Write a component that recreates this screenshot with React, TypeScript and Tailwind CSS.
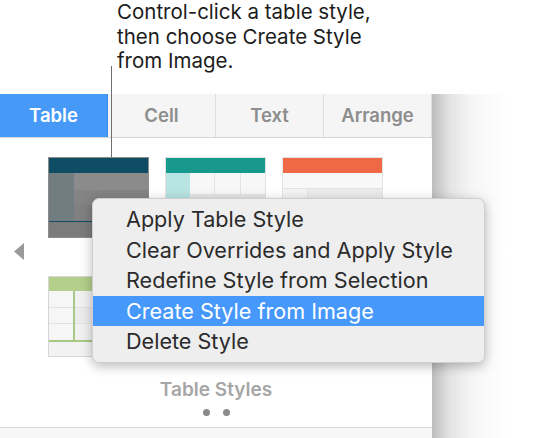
import React from "react";

const sans = "font-['Inter','Liberation_Sans',sans-serif]";

function DarkThumb() {
  return (
    <div className="w-[101px] h-[81px] border border-[#8c8c8c] flex flex-col bg-[#7d7d7d]">
      <div className="h-[15px] bg-[#0e4d63]" />
      <div className="flex flex-1">
        <div className="w-[25px] bg-[#727d82]" />
        <div className="flex-1 flex flex-col">
          <div className="h-[17px] bg-[#8b8b8b]" />
          <div className="h-[15px] bg-[#848484]" />
          <div className="h-[16px] bg-[#808080]" />
        </div>
      </div>
      <div className="h-px bg-[#0e4d63]" />
      <div className="h-[16px] bg-[#7b7b7b]" />
    </div>
  );
}

function TealThumb() {
  return (
    <div className="w-[101px] h-[81px] border border-[#e2e2e2] flex flex-col bg-white">
      <div className="h-[15px] bg-[#18998e]" />
      <div className="flex flex-1">
        <div className="w-[24px] bg-[#b8e4e4]" />
        <div className="flex-1 grid grid-cols-3 grid-rows-3 gap-px bg-[#e4e4e4]">
          <div className="bg-[#f7f7f7]" />
          <div className="bg-[#f7f7f7]" />
          <div className="bg-[#f7f7f7]" />
          <div className="bg-[#e6e6e6]" />
          <div className="bg-[#e6e6e6]" />
          <div className="bg-[#e6e6e6]" />
          <div className="bg-[#f7f7f7]" />
          <div className="bg-[#f7f7f7]" />
          <div className="bg-[#f7f7f7]" />
        </div>
      </div>
    </div>
  );
}

function OrangeThumb() {
  return (
    <div className="w-[101px] h-[81px] border border-[#e4e4e4] flex flex-col bg-white">
      <div className="h-[15px] bg-[#ef6947]" />
      <div className="flex-1 flex flex-col gap-px bg-[#e2e2e2]">
        <div className="flex-1 bg-[#f8f8f8]" />
        <div className="flex-1 flex gap-px">
          <div className="w-[24px] bg-[#f4f4f4]" />
          <div className="flex-1 bg-[#ececec]" />
        </div>
        <div className="flex-1 bg-[#f8f8f8]" />
        <div className="flex-1 bg-[#ececec]" />
      </div>
    </div>
  );
}

function GreenThumb() {
  return (
    <div className="w-[101px] h-[81px] border border-[#d6d6d6] flex flex-col bg-[#f3f3f3]">
      <div className="h-[14px] bg-[#b3cf8b]" />
      <div className="flex h-[49px]">
        <div className="w-[24px] flex flex-col gap-px bg-[#e2e2e2]">
          <div className="flex-1 bg-[#f6f6f6]" />
          <div className="flex-1 bg-[#f6f6f6]" />
          <div className="flex-1 bg-[#f6f6f6]" />
        </div>
        <div className="w-[2px] bg-[#a9c884]" />
        <div className="flex-1 flex flex-col gap-px bg-[#e2e2e2]">
          <div className="flex-1 bg-[#f1f1f1]" />
          <div className="flex-1 bg-[#ececec]" />
          <div className="flex-1 bg-[#f1f1f1]" />
        </div>
      </div>
      <div className="h-[2px] bg-[#a9c884]" />
      <div className="flex-1 bg-[#f2f2f2]" />
    </div>
  );
}

const tabs = ["Table", "Cell", "Text", "Arrange"];

const menuItems = [
  "Apply Table Style",
  "Clear Overrides and Apply Style",
  "Redefine Style from Selection",
  "Create Style from Image",
  "Delete Style",
];

export default function App() {
  return (
    <div className={`relative w-[554px] h-[438px] bg-white overflow-hidden flex flex-col ${sans}`}>
      {/* Callout */}
      <div className="h-[94px] pl-[117px] text-[20.5px] leading-[24.5px] text-[#1c1c1c]">
        <p>Control-click a table style,</p>
        <p>then choose Create Style</p>
        <p>from Image.</p>
      </div>
      <div className="absolute left-[111px] top-[66px] w-px h-[91px] bg-[#6f6f6f]" />

      <div className="flex flex-1">
        {/* Inspector panel */}
        <div className="w-[432px] flex flex-col bg-white">
          <div className="h-[44px] flex bg-[#f5f5f5] border-b border-[#d6d6d6]">
            {tabs.map((t, i) => (
              <div
                key={t}
                className={`w-[108px] flex items-center justify-center text-[18.5px] font-semibold ${
                  i === 0
                    ? "bg-[#4799f8] text-white border-r border-[#3a86e0]"
                    : "text-[#8d8d8d] border-r border-[#dedede]"
                }`}
              >
                {t}
              </div>
            ))}
          </div>

          <div className="flex pt-[19px]">
            <div className="w-[48px] flex items-center pl-[14px] pb-[12px]">
              <svg width="10" height="17" viewBox="0 0 10 17">
                <path d="M10 0 L0 8.5 L10 17 Z" fill="#9a9a9a" />
              </svg>
            </div>
            <div className="grid grid-cols-[101px_101px_101px] gap-x-[16px] gap-y-[38px]">
              <DarkThumb />
              <TealThumb />
              <OrangeThumb />
              <GreenThumb />
              <TealThumb />
              <OrangeThumb />
            </div>
          </div>

          <div className="mt-[22px] text-center text-[19px] font-semibold leading-[22px] text-[#a6a6a6]">
            Table Styles
          </div>
          <div className="flex justify-center gap-[13px] mt-[8px]">
            <span className="w-[7px] h-[7px] rounded-full bg-[#8a8a8a]" />
            <span className="w-[7px] h-[7px] rounded-full bg-[#8a8a8a]" />
          </div>
          <div className="flex-1" />
          <div className="h-[11px] border-t border-[#dadada] bg-[#f6f6f6]" />
        </div>

        {/* Window shadow */}
        <div className="flex-1 bg-[linear-gradient(to_right,#bdbdbd,#e4e4e4_18px,#f6f6f6_40px,#ffffff_75px)]" />
      </div>

      {/* Context menu */}
      <div className="absolute left-[92px] top-[198px] w-[393px] h-[165px] rounded-[7px] bg-[#eeeeee] border border-[#cfcfcf] shadow-[0_3px_12px_rgba(0,0,0,0.28)] pt-[5px]">
        {menuItems.map((m, i) => (
          <div
            key={m}
            className={`h-[30.5px] flex items-center pl-[33px] text-[21.6px] ${
              i === 3 ? "bg-[#4698fb] text-white" : "text-[#2b2b2b]"
            }`}
          >
            {m}
          </div>
        ))}
      </div>
    </div>
  );
}
